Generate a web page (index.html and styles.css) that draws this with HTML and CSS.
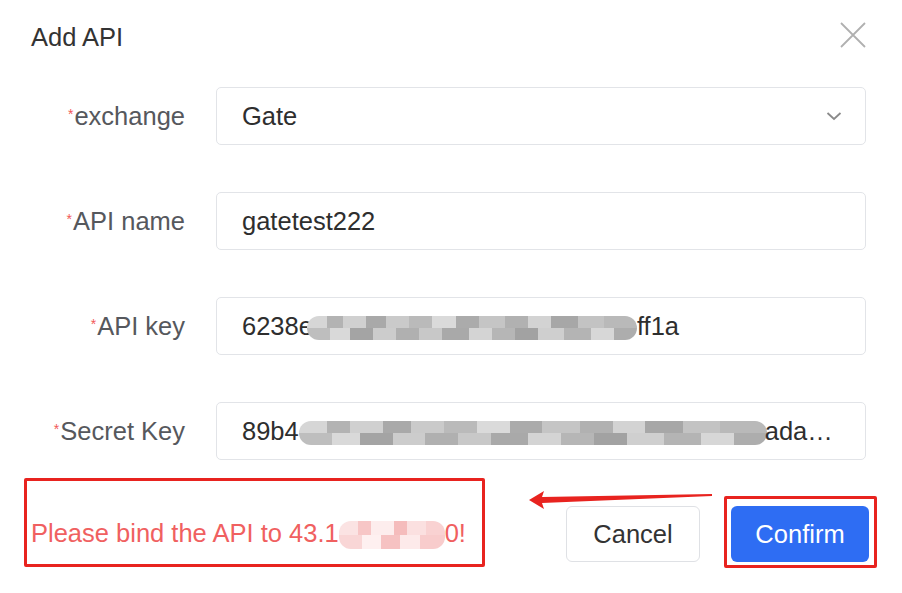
FILE: index.html
```html
<!DOCTYPE html>
<html lang="en">
<head>
    <meta charset="UTF-8">
    <meta name="viewport" content="width=device-width, initial-scale=1.0">
    <title>Add API</title>
    <link rel="stylesheet" href="styles.css">
</head>
<body>
    <div class="dialog">
        <div class="header">
            <div class="title">Add API</div>
            <svg class="close" width="26" height="26" viewBox="0 0 26 26">
                <path d="M1 1 L25 25 M25 1 L1 25" stroke="#b0b0b0" stroke-width="1.8" fill="none"/>
            </svg>
        </div>

        <div class="form">
            <div class="row">
                <label class="label"><span class="star">*</span>exchange</label>
                <div class="input select">
                    <span class="value">Gate</span>
                    <svg class="chevron" width="16" height="10" viewBox="0 0 16 10">
                        <path d="M1.5 2 L8 8 L14.5 2" stroke="#8a8a8a" stroke-width="1.8" fill="none"/>
                    </svg>
                </div>
            </div>
            <div class="row">
                <label class="label"><span class="star">*</span>API name</label>
                <div class="input"><span class="value">gatetest222</span></div>
            </div>
            <div class="row">
                <label class="label"><span class="star">*</span>API key</label>
                <div class="input">
                    <span class="value">6238e<span class="mosaic key"></span>ff1a</span>
                </div>
            </div>
            <div class="row">
                <label class="label"><span class="star">*</span>Secret Key</label>
                <div class="input">
                    <span class="value">89b4<span class="mosaic secret"></span>ada…</span>
                </div>
            </div>
        </div>

        <div class="footer">
            <div class="mark-box message">
                <span>Please bind the API to 43.1<span class="mosaic pink"></span>0!</span>
            </div>

            <!-- annotation arrow -->
            <svg class="arrow" width="190" height="26" viewBox="0 0 190 26">
                <polygon points="3,14 18,5 16,11 186,8 186,10 16,17 18,23" fill="#e8231f"/>
            </svg>

            <div class="actions">
                <button class="btn cancel">Cancel</button>
                <div class="mark-box confirm-box">
                    <button class="btn confirm">Confirm</button>
                </div>
            </div>
        </div>
    </div>
</body>
</html>
```

FILE: styles.css
```css
* {
    margin: 0;
    padding: 0;
    box-sizing: border-box;
}

body, html {
    height: 100%;
    background: #fff;
    font-family: "Liberation Sans", Arial, sans-serif;
    overflow: hidden;
}

.dialog {
    width: 902px;
    height: 593px;
}

.header {
    display: flex;
    justify-content: space-between;
    align-items: flex-start;
    padding: 22px 36px 0 31px;
}

.title {
    font-size: 25.5px;
    line-height: 30px;
    color: #333;
}

.form {
    display: flex;
    flex-direction: column;
    gap: 47px;
    margin-top: 35px;
    padding-right: 36px;
}

.row {
    display: flex;
    align-items: center;
    gap: 31px;
}

.label {
    width: 185px;
    text-align: right;
    font-size: 25.5px;
    color: #56585d;
    white-space: nowrap;
}

.star {
    color: #f25858;
    font-size: 14px;
    margin-right: 1px;
    vertical-align: 6px;
}

.input {
    flex: 1;
    height: 58px;
    display: flex;
    align-items: center;
    justify-content: space-between;
    padding: 0 23px 0 25px;
    border: 1px solid #e2e4e8;
    border-radius: 5px;
    font-size: 25.5px;
    color: #2e2e2e;
}

.value {
    white-space: nowrap;
}

.mosaic {
    display: inline-block;
    height: 24px;
    vertical-align: -5px;
    border-radius: 12px;
    background:
        linear-gradient(90deg, #d6d6d6 0 6%, #b3b3b3 6% 11%, #d0d0d0 11% 18%, #a9a9a9 18% 24%, #cacaca 24% 31%, #bababa 31% 38%, #dadada 38% 45%, #ababab 45% 52%, #c5c5c5 52% 60%, #b1b1b1 60% 67%, #d3d3d3 67% 74%, #a7a7a7 74% 82%, #c3c3c3 82% 90%, #b9b9b9 90% 100%) top / 100% 50% no-repeat,
        linear-gradient(90deg, #bebebe 0 7%, #d9d9d9 7% 13%, #a4a4a4 13% 20%, #cccccc 20% 27%, #b0b0b0 27% 34%, #c8c8c8 34% 41%, #a9a9a9 41% 49%, #d4d4d4 49% 56%, #b6b6b6 56% 63%, #a2a2a2 63% 70%, #cfcfcf 70% 78%, #b4b4b4 78% 86%, #d7d7d7 86% 93%, #adadad 93% 100%) bottom / 100% 50% no-repeat;
}

.mosaic.key {
    width: 330px;
    margin-left: -6px;
}

.mosaic.secret {
    width: 468px;
    margin-right: -2px;
}

.mosaic.pink {
    width: 106px;
    height: 28px;
    vertical-align: -7px;
    background:
        linear-gradient(90deg, #fbe3e3 0 18%, #f7c6c6 18% 30%, #fdeded 30% 52%, #f5bcbc 52% 64%, #fbe0e0 64% 82%, #f9d2d2 82% 100%) top / 100% 50% no-repeat,
        linear-gradient(90deg, #f9d6d6 0 22%, #fef0f0 22% 40%, #f6c2c2 40% 58%, #fdeaea 58% 76%, #f8cccc 76% 100%) bottom / 100% 50% no-repeat;
}

.footer {
    position: relative;
    display: flex;
    align-items: flex-start;
    margin-top: 18px;
    padding: 0 25px 0 24px;
}

.mark-box {
    border: 3px solid #e8231f;
    border-radius: 2px;
}

.message {
    width: 461px;
    height: 89px;
    display: flex;
    align-items: flex-end;
    padding: 0 0 15px 4px;
    font-size: 25.5px;
    color: #f06060;
    white-space: nowrap;
}

.arrow {
    position: absolute;
    left: 526px;
    top: 8px;
}

.actions {
    margin-left: auto;
    display: flex;
    align-items: flex-start;
    gap: 24px;
}

.btn {
    font-family: "Liberation Sans", Arial, sans-serif;
    font-size: 25.5px;
    height: 56px;
    border-radius: 6px;
    cursor: pointer;
}

.cancel {
    width: 134px;
    margin-top: 28px;
    background: #fff;
    color: #333;
    border: 1px solid #dfe1e5;
}

.confirm-box {
    margin-top: 18px;
    padding: 7px 5px 3px 4px;
}

.confirm {
    display: block;
    width: 138px;
    background: #2e6df3;
    color: #fff;
    border: none;
}
```
